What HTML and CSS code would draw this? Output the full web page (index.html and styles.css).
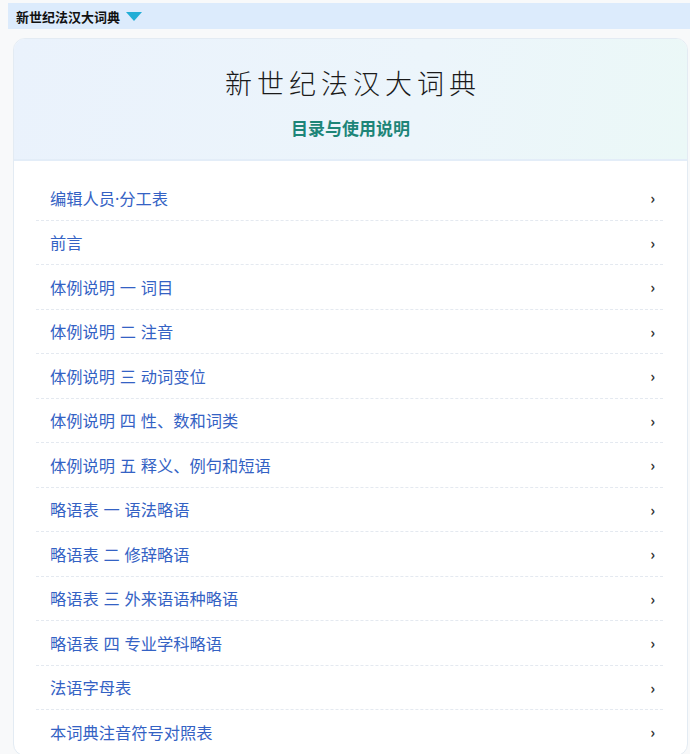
FILE: index.html
```html
<!DOCTYPE html>
<html lang="zh-CN">
<head>
    <meta charset="UTF-8">
    <meta name="viewport" content="width=device-width, initial-scale=1.0">
    <title>新世纪法汉大词典</title>
    <link rel="stylesheet" href="styles.css">
</head>
<body>

    <div class="topbar">
        <span class="book-name">新世纪法汉大词典</span>
        <span class="caret"></span>
    </div>

    <div class="card">
        <div class="card-head">
            <h1>新世纪法汉大词典</h1>
            <h2>目录与使用说明</h2>
        </div>

        <ul class="toc">
            <li><a href="#">编辑人员·分工表</a><span class="arrow">›</span></li>
            <li><a href="#">前言</a><span class="arrow">›</span></li>
            <li><a href="#">体例说明 一 词目</a><span class="arrow">›</span></li>
            <li><a href="#">体例说明 二 注音</a><span class="arrow">›</span></li>
            <li><a href="#">体例说明 三 动词变位</a><span class="arrow">›</span></li>
            <li><a href="#">体例说明 四 性、数和词类</a><span class="arrow">›</span></li>
            <li><a href="#">体例说明 五 释义、例句和短语</a><span class="arrow">›</span></li>
            <li><a href="#">略语表 一 语法略语</a><span class="arrow">›</span></li>
            <li><a href="#">略语表 二 修辞略语</a><span class="arrow">›</span></li>
            <li><a href="#">略语表 三 外来语语种略语</a><span class="arrow">›</span></li>
            <li><a href="#">略语表 四 专业学科略语</a><span class="arrow">›</span></li>
            <li><a href="#">法语字母表</a><span class="arrow">›</span></li>
            <li><a href="#">本词典注音符号对照表</a><span class="arrow">›</span></li>
        </ul>
    </div>

</body>
</html>
```

FILE: styles.css
```css
* {
    margin: 0;
    padding: 0;
    box-sizing: border-box;
}

body {
    font-family: "Noto Sans CJK SC", "Noto Sans", sans-serif;
    background-color: #f8f9fa;
    color: #333;
    overflow: hidden;
}

.topbar {
    display: flex;
    align-items: center;
    gap: 6px;
    height: 26px;
    margin: 3px 0 0 8px;
    padding-left: 8px;
    background-color: #dcebfc;
}

.book-name {
    font-size: 13px;
    font-weight: bold;
    color: #111;
}

.caret {
    width: 0;
    height: 0;
    border-left: 8px solid transparent;
    border-right: 8px solid transparent;
    border-top: 9px solid #22aed6;
    margin-top: 1px;
}

.card {
    margin: 9px 2px 0 13px;
    background-color: #fff;
    border: 1px solid #e3ebf3;
    border-radius: 12px;
    overflow: hidden;
}

.card-head {
    background: linear-gradient(100deg, #eaf2fc 0%, #ecf5fb 60%, #ebf8f7 100%);
    border-bottom: 2px solid #e3edf8;
    padding: 22px 0 18px;
    text-align: center;
}

.card-head h1 {
    font-size: 27px;
    font-weight: 300;
    letter-spacing: 5px;
    color: #1a1a1a;
    line-height: 44px;
    padding-left: 5px;
}

.card-head h2 {
    margin-top: 10px;
    font-size: 17px;
    font-weight: bold;
    color: #1d8578;
    line-height: 26px;
}

.toc {
    list-style: none;
    padding: 15px 24px 0 22px;
}

.toc li {
    display: flex;
    justify-content: space-between;
    align-items: center;
    height: 44.5px;
    padding: 0 8px 0 14px;
    border-bottom: 1px dashed #e4e9f0;
}

.toc a {
    font-family: "Noto Sans", "Noto Sans CJK SC", sans-serif;
    font-size: 16.25px;
    word-spacing: 0.5px;
    color: #3462c4;
    text-decoration: none;
}

.arrow {
    font-size: 15px;
    font-weight: bold;
    color: #333;
}
```
